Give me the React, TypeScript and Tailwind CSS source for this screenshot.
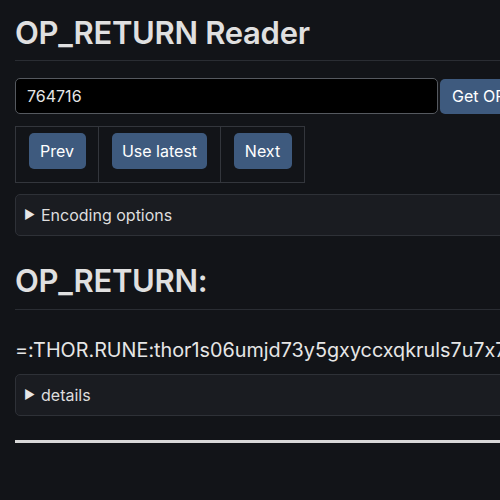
import React from "react";

export default function App() {
  return (
    <div className="w-[500px] h-[500px] overflow-hidden bg-[#121418] text-[#dedede] [font-feature-settings:'calt'_0]" style={{ fontFamily: "Inter, 'Noto Sans', sans-serif" }}>
      <div className="w-[900px] pl-[15px] pt-[14px]">
        <h1 className="text-[31px] leading-[38px] font-semibold tracking-[-0.3px] text-[#e0e0e0]">OP_RETURN Reader</h1>
        <div className="mt-[8px] h-px bg-[#2a2d33]" />
        <div className="mt-[17px] flex items-center gap-[2px]">
          <div className="w-[423px] h-[36px] bg-black border border-[#55595f] rounded-[5px] flex items-center pl-[11px] text-[16px] text-[#e6e6e6]">764716</div>
          <button className="h-[35px] px-[12px] bg-[#3e5a7e] rounded-[5px] text-[16px] text-white">Get OP_RETURN</button>
        </div>
        <div className="mt-[12px] flex w-[290px] h-[57px] border border-[#33363c]">
          <div className="w-[83px] flex justify-center pt-[6px] border-r border-[#33363c]">
            <button className="w-[57px] h-[36px] bg-[#3e5a7e] rounded-[5px] text-[16px] text-white">Prev</button>
          </div>
          <div className="w-[122px] flex justify-center pt-[6px] border-r border-[#33363c]">
            <button className="w-[95px] h-[36px] bg-[#3e5a7e] rounded-[5px] text-[16px] text-white">Use latest</button>
          </div>
          <div className="flex-1 flex justify-center pt-[6px]">
            <button className="w-[58px] h-[36px] bg-[#3e5a7e] rounded-[5px] text-[16px] text-white">Next</button>
          </div>
        </div>
        <div className="mt-[11px] h-[42px] bg-[#1a1c21] border border-[#2e3137] rounded-[5px] flex items-center pl-[8px] text-[16px]">
          <span className="text-[12px] mr-[6px] text-[#e6e6e6]">▶</span>
          <span>Encoding options</span>
        </div>
        <h2 className="mt-[26px] text-[31px] leading-[38px] font-semibold tracking-[-0.3px] text-[#e0e0e0]">OP_RETURN:</h2>
        <div className="mt-[9px] h-px bg-[#2a2d33]" />
        <div className="mt-[28px] text-[19.8px] leading-[24px] whitespace-nowrap text-[#e6e6e6]">=:THOR.RUNE:thor1s06umjd73y5gxyccxqkruls7u7x7gkp8h6ls8d:0/1/0</div>
        <div className="mt-[12px] h-[42px] bg-[#1a1c21] border border-[#2e3137] rounded-[5px] flex items-center pl-[8px] text-[16px]">
          <span className="text-[12px] mr-[6px] text-[#e6e6e6]">▶</span>
          <span>details</span>
        </div>
        <div className="mt-[24px] h-[3px] bg-[#d8d8d8]" />
      </div>
    </div>
  );
}
